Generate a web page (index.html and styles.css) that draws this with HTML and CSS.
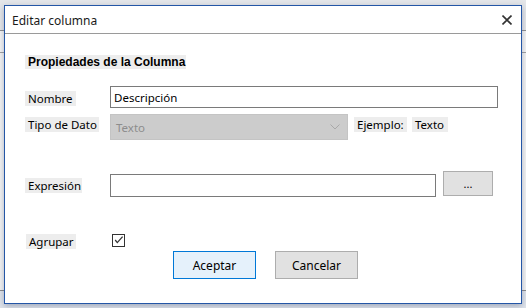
FILE: index.html
```html
<!DOCTYPE html>
<html lang="es">
<head>
    <meta charset="UTF-8">
    <title>Editar columna</title>
    <link rel="stylesheet" href="styles.css">
</head>
<body>
    <div class="window">
        <div class="titlebar">
            <span class="title">Editar columna</span>
            <svg class="close" width="10" height="10" viewBox="0 0 10 10">
                <path d="M0.5 0.5 L9.5 9.5 M9.5 0.5 L0.5 9.5" stroke="#333" stroke-width="1.6" fill="none"/>
            </svg>
        </div>

        <div class="client">
            <div class="section">Propiedades de la Columna</div>

            <div class="row row-nombre">
                <span class="label lbl-nombre">Nombre</span>
                <input class="textbox tb-nombre" type="text" value="Descripción">
            </div>

            <div class="row row-tipo">
                <span class="label lbl-tipo">Tipo de Dato</span>
                <div class="combo">
                    <span>Texto</span>
                    <svg width="10" height="6" viewBox="0 0 10 6">
                        <path d="M0.5 0.5 L5 5 L9.5 0.5" stroke="#a8a8a8" stroke-width="1" fill="none"/>
                    </svg>
                </div>
                <span class="label lbl-ejemplo">Ejemplo:</span>
                <span class="label lbl-texto">Texto</span>
            </div>

            <div class="row row-expr">
                <span class="label lbl-expr">Expresión</span>
                <input class="textbox tb-expr" type="text" value="">
                <button class="btn btn-dots">...</button>
            </div>

            <div class="row row-agrupar">
                <span class="label lbl-agrupar">Agrupar</span>
                <span class="check">
                    <svg width="11" height="11" viewBox="0 0 11 11">
                        <path d="M2.2 5 L4.3 7.6 L9.6 1.6" stroke="#333" stroke-width="1.3" fill="none"/>
                    </svg>
                </span>
            </div>

            <div class="row row-buttons">
                <button class="btn btn-default">Aceptar</button>
                <button class="btn">Cancelar</button>
            </div>
        </div>
    </div>
</body>
</html>
```

FILE: styles.css
```css
body {
    margin: 0;
    padding: 5px 0 0 4px;
    width: 526px;
    height: 308px;
    box-sizing: border-box;
    overflow: hidden;
    font-family: "Noto Sans", "Open Sans", sans-serif;
    font-size: 11.5px;
    color: #000;
    background: linear-gradient(to bottom,
        #e4e6e9 0, #e4e6e9 30px,
        #8f8f8f 30px, #8f8f8f 31px,
        #f4f4f4 31px, #f4f4f4 52px,
        #a0a0a0 52px, #a0a0a0 53px,
        #f2f2f2 53px, #f2f2f2 290px,
        #8a8a8a 290px, #8a8a8a 291px,
        #dfe3ea 291px);
}
.window {
    width: 518px;
    height: 299px;
    box-sizing: border-box;
    border: 1px solid #2456a6;
    background: #fff;
    box-shadow: 0 2px 6px rgba(40, 60, 100, 0.35);
}
.titlebar {
    height: 27px;
    border-bottom: 1px solid #9a9a9a;
    display: flex;
    align-items: center;
    justify-content: space-between;
    padding: 0 9px 0 7px;
}
.title {
    font-size: 12px;
    color: #1a1a1a;
    margin-top: 1px;
}
.close {
    margin-top: 1px;
}
.client {
    padding-left: 20px;
}
.section {
    margin-top: 21px;
    width: 161px;
    height: 14px;
    line-height: 14px;
    padding-left: 3px;
    box-sizing: border-box;
    background: #ededed;
    font-family: "Liberation Sans", Arial, sans-serif;
    font-weight: bold;
    font-size: 12px;
    white-space: nowrap;
}
.row {
    display: flex;
    align-items: flex-start;
}
.label {
    display: block;
    height: 15px;
    line-height: 15px;
    padding-left: 3px;
    box-sizing: border-box;
    background: #ededed;
    white-space: nowrap;
}
.textbox {
    box-sizing: border-box;
    border: 1px solid #7a7a7a;
    background: #fff;
    font-family: inherit;
    font-size: inherit;
    padding: 0 3px;
    margin: 0;
    outline: none;
}
.row-nombre {
    margin-top: 17px;
}
.lbl-nombre {
    width: 51px;
    margin-top: 5px;
    margin-right: 34px;
}
.tb-nombre {
    width: 388px;
    height: 22px;
}
.row-tipo {
    margin-top: 6px;
}
.lbl-tipo {
    width: 74px;
    margin-top: 3px;
    margin-right: 11px;
}
.combo {
    width: 238px;
    height: 26px;
    box-sizing: border-box;
    background: #cccccc;
    border: 1px solid #c4c4c4;
    display: flex;
    align-items: center;
    justify-content: space-between;
    padding: 0 7px 0 5px;
    color: #8d8d8d;
}
.lbl-ejemplo {
    width: 53px;
    margin-top: 3px;
    margin-left: 6px;
}
.lbl-texto {
    width: 36px;
    margin-top: 3px;
    margin-left: 5px;
}
.row-expr {
    margin-top: 31px;
}
.lbl-expr {
    width: 57px;
    margin-top: 7px;
    margin-right: 28px;
}
.tb-expr {
    width: 326px;
    height: 23px;
    margin-top: 3px;
}
.btn {
    width: 83px;
    height: 28px;
    box-sizing: border-box;
    border: 1px solid #adadad;
    background: #e1e1e1;
    font-family: inherit;
    font-size: 12px;
    color: #000;
    padding: 0;
}
.btn-dots {
    width: 50px;
    height: 25px;
    margin-left: 7px;
    font-size: 11px;
}
.btn-default {
    border-color: #0078d7;
    background: #e5f1fb;
}
.row-agrupar {
    margin-top: 37px;
}
.lbl-agrupar {
    width: 50px;
    margin-left: 1px;
    margin-right: 35px;
}
.check {
    width: 13px;
    height: 13px;
    box-sizing: border-box;
    border: 1px solid #333;
    display: flex;
    margin-left: 1px;
}
.row-buttons {
    margin-top: 2px;
    padding-left: 148px;
    gap: 19px;
}
```
